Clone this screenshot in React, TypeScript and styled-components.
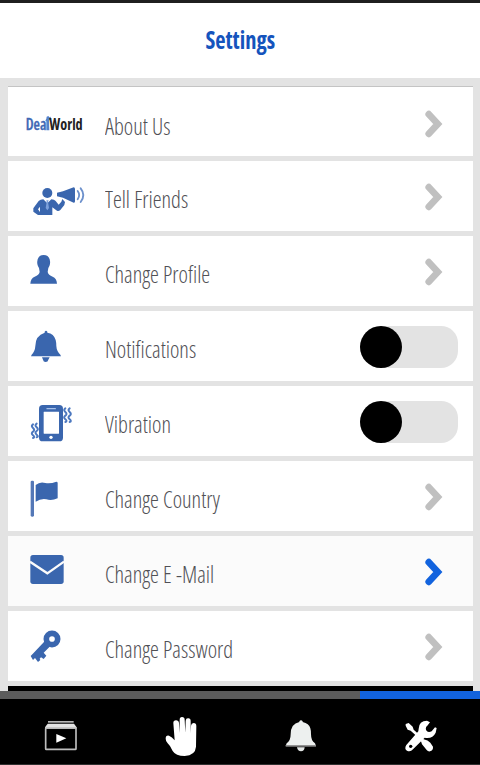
import React from "react";
import styled, { createGlobalStyle } from "styled-components";

const BLUE = "#3a66ae";

const GlobalStyle = createGlobalStyle`
  * { box-sizing: border-box; }
  body { margin: 0; background: #e3e3e3; font-family: "Open Sans", "Liberation Sans", sans-serif; }
`;

const Screen = styled.div`
  width: 480px;
  height: 765px;
  display: flex;
  flex-direction: column;
  overflow: hidden;
  background: #e3e3e3;
`;

const Header = styled.header`
  height: 78px;
  flex: none;
  border-top: 3px solid #1f1f1f;
  background: #fff;
  display: flex;
  justify-content: center;
  padding-top: 20px;
`;

const Title = styled.h1`
  margin: 0;
  font-size: 24px;
  line-height: 33px;
  font-weight: 700;
  font-stretch: 75%;
  transform: scaleX(0.935);
  color: #1554bd;
`;

const List = styled.main`
  flex: 1;
  display: flex;
  flex-direction: column;
  gap: 5px;
  padding: 8px 7px 0 8px;
`;

const Row = styled.div<{ $first?: boolean; $active?: boolean }>`
  height: 70px;
  flex: none;
  display: flex;
  background: ${(p) => (p.$active ? "#fbfbfb" : "#fff")};
  box-shadow: ${(p) => (p.$first ? "inset 0 1px 0 #c4c4c4" : "none")};
  padding-top: ${(p) => (p.$first ? "2px" : "0")};
`;

const RowIcon = styled.svg`
  width: 97px;
  height: 70px;
  flex: none;
  display: block;
  fill: ${BLUE};
`;

const Label = styled.span`
  flex: 1;
  padding-top: 21px;
  font-size: 24px;
  line-height: 33px;
  font-weight: 300;
  font-stretch: 75%;
  white-space: nowrap;
  transform: scaleX(0.933);
  transform-origin: 0 0;
  color: #505055;
`;

const Chevron = styled.svg<{ $active?: boolean }>`
  width: 18px;
  height: 28px;
  flex: none;
  margin: 22px 30px 0 0;
  fill: none;
  stroke: ${(p) => (p.$active ? "#1263de" : "#c0c0c0")};
  stroke-width: 6.8;
  stroke-linecap: round;
  stroke-linejoin: miter;
`;

const Toggle = styled.div`
  width: 98px;
  height: 42px;
  margin: 15px 15px 0 0;
  border-radius: 21px 17px 17px 21px;
  background: #e3e3e3;
`;

const Knob = styled.div`
  width: 42px;
  height: 42px;
  border-radius: 50%;
  background: #000;
`;

const NextRow = styled.div`
  height: 5px;
  flex: none;
  background: #000;
`;

const TabTrack = styled.div`
  height: 8px;
  flex: none;
  display: flex;
  justify-content: flex-end;
  background: #5c5c5c;
`;

const TabMarker = styled.div`
  width: 120px;
  background: #1263de;
`;

const TabBar = styled.nav`
  height: 66px;
  flex: none;
  display: grid;
  grid-template-columns: repeat(4, 120px);
  background: #000;
  border-bottom: 1px solid #303030;
`;

const TabIcon = styled.svg`
  width: 120px;
  height: 65px;
  display: block;
  fill: #fff;
`;

const LogoText = styled.text`
  font-family: "Open Sans", sans-serif;
  font-size: 47px;
  font-stretch: 75%;
`;

const AboutIcon = () => (
  <RowIcon viewBox="24 26 291 210">
    <LogoText x="77" y="153" textLength="62" lengthAdjust="spacingAndGlyphs" fontWeight="600" fill="#4068b5" stroke="#4068b5" strokeWidth="1">Dea</LogoText>
    <path d="M139 153V126l-3-2 3-6 1-6 5-2 3 4 5-2-2 7-4 5 1 29z" fill="#5683cb" />
    <LogoText x="148" y="153" textLength="100" lengthAdjust="spacingAndGlyphs" fontWeight="700" fill="#222">World</LogoText>
  </RowIcon>
);

const FriendsIcon = () => (
  <RowIcon viewBox="24 243 291 210">
    <ellipse cx="142" cy="339" rx="15" ry="15" />
    <path d="M100 385l16-22q5-4 14-5l12 12 12-12q9 0 13 5l9 11 8-9 3-8 8 9-2 9-12 15q-5 4-10 2l-14-10v23h-43l-14-10z" />
    <path d="M139 361h7l-2 5 3 18-5 7-5-7 3-18z" fill="#7da1dc" />
    <path d="M120 380l-6 8 6 8z" fill="#fff" />
    <path d="M171 338l18-4 32-12q4 0 4 5v37q0 5-4 4l-32-15-18-4z" />
    <path d="M233 333q9 12 0 25M242 325q16 20 0 41" fill="none" stroke="#6d91cc" strokeWidth="5.5" strokeLinecap="round" />
  </RowIcon>
);

const ProfileIcon = () => (
  <RowIcon viewBox="24 3 291 210">
    <path d="M113 73q4-13 18-13t18 13q4 15-4 26l-2 12q2 9 15 14 12 5 13 21H91q1-16 13-21 13-5 15-14l-2-12q-8-11-4-26z" />
  </RowIcon>
);

const NotificationsIcon = () => (
  <RowIcon viewBox="24 228 291 210">
    <path d="M134 290q4-5 8 0v3q20 3 25 22 2 8 2 18 1 16 12 26l2 5H93l2-5q10-10 11-26 0-31 28-40z" />
    <path d="M126 367h23l-4 7q-1 7-8 7t-8-7z" />
  </RowIcon>
);

const VibrationIcon = () => (
  <RowIcon viewBox="24 3 291 210">
    <rect x="117" y="60" width="72" height="109" rx="11" />
    <rect x="131" y="80" width="46" height="66" rx="1" fill="#fff" />
    <rect x="139" y="69" width="29" height="4" rx="2" fill="#a8c2ea" />
    <circle cx="153" cy="157" r="5" fill="#fff" />
    <path
      d="M196 70q-7 5 0 11t0 11 0 11 0 8M209 70q-7 5 0 11t0 11 0 11 0 8M99 118q-7 5 0 11t0 11 0 11 0 8M110 116q-7 5 0 11t0 11 0 11 0 8"
      fill="none" stroke="#4c78bf" strokeWidth="6" strokeLinecap="round" strokeLinejoin="round"
    />
  </RowIcon>
);

const CountryIcon = () => (
  <RowIcon viewBox="24 228 291 210">
    <rect x="92" y="287" width="10" height="108" rx="4" fill="#5478b7" />
    <path d="M107 300q13-11 29-6 15 3 33-4 4 0 4 4v46q-18 8-34 3-16-3-32 7z" />
  </RowIcon>
);

const MailIcon = () => (
  <RowIcon viewBox="24 3 291 210">
    <rect x="91" y="60" width="100" height="87" rx="8" />
    <path d="M90 80l52 35 50-35" fill="none" stroke="#fbfbfb" strokeWidth="7" />
  </RowIcon>
);

const PasswordIcon = () => (
  <RowIcon viewBox="24 228 291 210">
    <circle cx="156" cy="312" r="17" fill="none" stroke={BLUE} strokeWidth="17" />
    <path d="M134 319l15 16-18 18 8 9-8 10-8-5-4 4 2 4-7 6-9-12-6 6-7-12 8-8z" />
  </RowIcon>
);

type Item = {
  label: string;
  icon: () => React.ReactElement;
  toggle?: boolean;
  active?: boolean;
};

const items: Item[] = [
  { label: "About Us", icon: AboutIcon },
  { label: "Tell Friends", icon: FriendsIcon },
  { label: "Change Profile", icon: ProfileIcon },
  { label: "Notifications", icon: NotificationsIcon, toggle: true },
  { label: "Vibration", icon: VibrationIcon, toggle: true },
  { label: "Change Country", icon: CountryIcon },
  { label: "Change E -Mail", icon: MailIcon, active: true },
  { label: "Change Password", icon: PasswordIcon },
];

export default function App() {
  return (
    <>
      <GlobalStyle />
      <Screen>
        <Header>
          <Title>Settings</Title>
        </Header>
        <List>
          {items.map(({ label, icon: Icon, toggle, active }, i) => (
            <Row key={label} $first={i === 0} $active={active}>
              <Icon />
              <Label>{label}</Label>
              {toggle ? (
                <Toggle>
                  <Knob />
                </Toggle>
              ) : (
                <Chevron viewBox="0 0 18 28" $active={active}>
                  <path d="M3.8 4.2l9 9.8-9 9.8" />
                </Chevron>
              )}
            </Row>
          ))}
          <NextRow />
        </List>
        <TabTrack>
          <TabMarker />
        </TabTrack>
        <TabBar>
          <TabIcon viewBox="0 57 360 195">
            <rect x="144" y="123" width="77" height="5" fill="#b5b5b5" />
            <path d="M143 131h79l8 11v4h-95v-4z" fill="#e2e2e2" />
            <rect x="137" y="144" width="91" height="64" rx="2" fill="none" stroke="#bdbdbd" strokeWidth="5" />
            <path d="M169 162l30 13-30 13z" />
          </TabIcon>
          <TabIcon viewBox="360 57 360 195">
            <path d="M497 176Q497 165 507 167Q516 171 524 181L520 129Q520 121 528 121Q536 121 537 129L539 158L539 119Q539 111 546 111Q554 111 554 119L556 158L557 122Q558 114 565 115Q572 115 572 123L572 160L573 137Q574 129 581 129Q589 129 589 138L588 200Q586 226 554 228Q527 228 518 213Q511 197 503 190Q497 184 497 176Z" />
          </TabIcon>
          <TabIcon viewBox="0 57 360 195">
            <path d="M178 124q5-6 10 0v2q19 4 23 19 2 6 2 18 0 20 12 27l3 8H137l3-8q12-8 12-27 0-32 26-37z" fill="#edf0ef" />
            <path d="M137 195h91v5h-91z" fill="#929292" />
            <path d="M171 202h23q-1 12-11 12t-12-12z" fill="#e3e6e5" />
          </TabIcon>
          <TabIcon viewBox="360 57 360 195">
            <path d="M497 132l9-3 12 11 3 9 21 19 9 10q13 2 20 10l8 12q1 11-9 14-6 1-10-4l-14-17-4-12-10-11-20-18-9-3-6-12z" />
            <path d="M561 122q-24 0-25 24l-1 8-36 41q-7 12 2 17 10 5 18-4l35-35q24 4 33-15l3-14-5-2-10 12q-9 5-15-1-6-10 2-16l8-10z" />
            <circle cx="512" cy="199" r="5" fill="#000" />
          </TabIcon>
        </TabBar>
      </Screen>
    </>
  );
}
